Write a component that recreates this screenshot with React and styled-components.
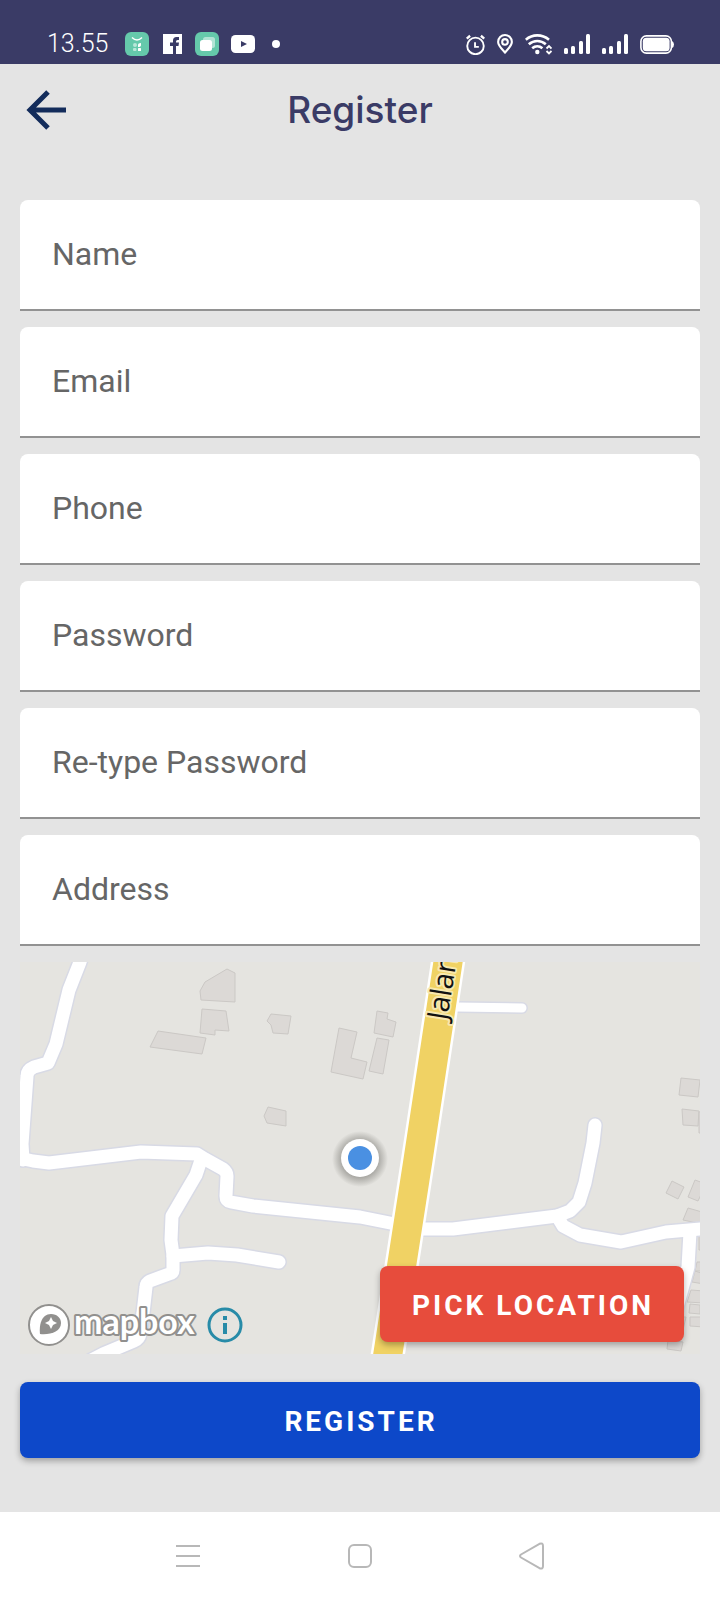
import React from "react";
import styled, { createGlobalStyle } from "styled-components";

const GlobalStyle = createGlobalStyle`
  *, *::before, *::after { box-sizing: border-box; }
  body { margin: 0; background: #e4e4e4; font-family: Roboto, "Noto Sans", sans-serif; }
  button { font-family: inherit; }
`;

const Screen = styled.div`
  display: flex;
  flex-direction: column;
  min-height: 100vh;
`;

const StatusBar = styled.div`
  display: flex;
  justify-content: space-between;
  align-items: center;
  height: 64px;
  padding: 24px 46px 0 47px;
  background: #3a3b66;
  color: #fff;
`;

const StatusGroup = styled.div`
  display: flex;
  align-items: center;
  gap: ${({ $gap }) => $gap}px;
  svg { display: block; }
`;

const Clock = styled.time`
  width: 66px;
  font-size: 25px;
  font-weight: 300;
  line-height: 28px;
`;

const Header = styled.header`
  display: grid;
  grid-template-columns: 60px 1fr 60px;
  align-items: center;
  height: 92px;
  padding: 0 16px;
`;

const IconButton = styled.button`
  display: flex;
  align-items: center;
  justify-content: center;
  padding: 0;
  border: 0;
  background: none;
  cursor: pointer;
`;

const Title = styled.h1`
  margin: 0;
  font-family: Inter, sans-serif;
  font-size: 37px;
  font-weight: 500;
  line-height: 44px;
  text-align: center;
  color: #3a3b66;
`;

const Form = styled.form`
  display: flex;
  flex: 1;
  flex-direction: column;
  gap: 16px;
  padding: 44px 20px 54px;
`;

const Field = styled.label`
  display: block;
  height: 111px;
  border-bottom: 2px solid #929292;
  border-radius: 8px 8px 0 0;
  background: #fff;
`;

const FieldInput = styled.input`
  display: block;
  width: 100%;
  height: 100%;
  padding: 0 32px 2px;
  border: 0;
  outline: 0;
  background: none;
  font-family: inherit;
  font-size: 32px;
  line-height: 40px;
  color: #222;
  &::placeholder { color: #666; opacity: 1; }
`;

const MapPanel = styled.section`
  position: relative;
  height: 392px;
  margin-bottom: 12px;
  overflow: hidden;
  background: #e5e4e0;
`;

const MapDrawing = styled.svg`
  display: block;
  width: 100%;
  height: 100%;
`;

const Attribution = styled.div`
  position: absolute;
  left: 8px;
  bottom: 7px;
  display: flex;
  align-items: center;
  gap: 7px;
  a, svg { display: block; }
`;

const ActionButton = styled.button`
  height: 76px;
  padding: 3px 30px 0 32px;
  border: 0;
  border-radius: 8px;
  background: ${({ $color }) => $color};
  box-shadow: 0 3px 6px rgba(0, 0, 0, 0.3);
  color: #fff;
  font-size: 28px;
  font-weight: 700;
  line-height: 36px;
  letter-spacing: 3px;
  text-transform: uppercase;
  cursor: pointer;
`;

const PickButton = styled(ActionButton)`
  position: absolute;
  right: 16px;
  bottom: 12px;
`;

const NavBar = styled.nav`
  display: flex;
  height: 88px;
  padding: 0 102px;
  background: #fff;
`;

const NavButton = styled(IconButton)`
  flex: 1;
  color: #b8b8b8;
`;

const fields = [
  { label: "Name", type: "text" },
  { label: "Email", type: "email" },
  { label: "Phone", type: "tel" },
  { label: "Password", type: "password" },
  { label: "Re-type Password", type: "password" },
  { label: "Address", type: "text" },
];

const roads = [
  "M64 -12L60 0L49 28L36 82L28 101L14 105Q7 108 7 114L2 182L3 198",
  "M-8 196L0 196L13 199L29 201L121 190L177 192L185 197L203 207Q207 210 207 214L206 234Q206 239 211 240L233 244L340 255L375 262L403 267L433 267L537 254L550 249L559 240L565 221L573 181L575 163",
  "M181 198L176 213L152 254L151 278L153 293L153 308Q153 311 149 312L130 319Q126 321 126 325L123 351L120 372Q119 377 114 379L83 392L60 404",
  "M153 294L188 291L217 293L259 300",
  "M537 254L543 264L560 273L601 280L646 270L690 266",
  "M670 270L668 305L657 345L653 365",
];

const buildings = [
  "207,7 215,11 215,40 181,38 180,29 185,20",
  "182,47 206,49 209,69 195,68 195,73 180,71",
  "138,69 186,76 182,92 130,85",
  "251,52 271,54 268,72 253,71 251,63 247,59",
  "248,145 266,149 266,164 247,161 244,154",
  "319,66 337,70 331,96 347,100 343,117 311,110",
  "357,49 368,51 367,57 376,60 373,75 354,71",
  "357,76 369,78 363,112 349,109",
  "661,116 680,118 678,135 659,133",
  "662,147 679,149 678,164 663,163",
  "679,150 684,150 684,171 679,171",
  "652,219 664,225 658,237 646,231",
  "675,218 686,222 678,239 668,235",
  "668,246 682,250 682,262 663,258",
  "679,274 684,274 684,288 679,288",
  "677,300 684,300 684,309 675,309",
  "675,309 684,312 684,322 672,320",
  "671,328 684,329 684,341 667,340",
  "670,342 680,343 680,352 669,351",
  "670,355 684,355 684,365 670,364",
  "662,355 666,355 663,368 660,368",
  "648,378 663,380 661,389 647,387",
];

const AppBadge = ({ children }) => (
  <svg width="24" height="24" viewBox="0 0 24 24" aria-hidden="true">
    <rect width="24" height="24" rx="6" fill="#65c9ab" />
    {children}
  </svg>
);

const Signal = () => (
  <svg width="26" height="20" viewBox="0 0 26 20" fill="#fff" aria-hidden="true">
    <rect x="0" y="14" width="4" height="6" rx="1.5" />
    <rect x="7" y="12" width="4" height="8" rx="1.5" />
    <rect x="15" y="7" width="4" height="13" rx="1.5" />
    <rect x="22" y="0" width="4" height="20" rx="1.5" />
  </svg>
);

const StatusIcons = () => (
  <StatusGroup $gap={12}>
    <svg width="19" height="21" viewBox="0 0 20 22" fill="none" stroke="#fff" strokeWidth="2" aria-hidden="true">
      <circle cx="10" cy="12.500" r="8.700" />
      <path d="M9.500 8.500v5h4" />
      <path d="M.8 4.800L4.300 1.800M19.200 4.800L15.700 1.800" strokeWidth="2.500" />
    </svg>
    <svg width="16" height="20" viewBox="0 0 17 21" fill="none" stroke="#fff" strokeWidth="2.200" aria-hidden="true">
      <path d="M8.500 19.500C6 16.500 1.200 12.500 1.200 8.300a7.300 7.300 0 0 1 14.600 0c0 4.200-4.800 8.200-7.300 11.200z" />
      <circle cx="8.500" cy="8.300" r="3" />
    </svg>
    <svg width="27" height="21" viewBox="0 0 27 21" fill="none" stroke="#fff" strokeWidth="2.600" aria-hidden="true">
      <path d="M.8 5.700C7.500-.1 17-.1 24 5.700M3.800 10.200c5-4.300 12-4.300 17 0M7.200 14.300c3-2.600 7.200-2.600 10.200 0" />
      <circle cx="12.300" cy="18" r="2.200" fill="#fff" stroke="none" />
      <path d="M21.500 14.500l2.500-2.500 2.500 2.500M21.500 17l2.500 2.500 2.500-2.500" strokeWidth="1.800" />
    </svg>
    <Signal />
    <Signal />
    <svg width="34" height="19" viewBox="0 0 34 19" aria-hidden="true">
      <rect x=".9" y=".9" width="30.500" height="17.200" rx="5.500" fill="none" stroke="#fff" strokeWidth="1.600" />
      <rect x="2.800" y="2.800" width="26.800" height="13.400" rx="3.500" fill="#fff" />
      <path d="M32 6q2 1 2 3.500T32 13z" fill="#fff" />
    </svg>
  </StatusGroup>
);

const Notifications = () => (
  <StatusGroup $gap={12}>
    <Clock>13.55</Clock>
    <AppBadge>
      <path d="M7 5.500q5 5 10 0" fill="none" stroke="#fff" strokeWidth="1.500" />
      <circle cx="10" cy="13" r="2" fill="#b9e7d9" />
      <path d="M13 15v-2q0-2 3-2v2q0 2-3 2z" fill="#fff" />
      <rect x="8" y="16" width="3.500" height="3" rx="1" fill="#b9e7d9" />
      <rect x="13" y="16" width="3" height="3" rx=".5" fill="#fff" />
    </AppBadge>
    <svg width="22" height="20" viewBox="0 0 22 20" aria-hidden="true">
      <rect x="2" width="19" height="20" fill="#fff" />
      <path d="M12 20v-8H9V8.500h3V6.500Q12 3 15.500 3H18v3h-1.500Q15 6 15 7.500v1h3l-.5 3.500H15v8z" fill="#3a3b66" />
    </svg>
    <AppBadge>
      <rect x="8" y="5" width="12" height="11" rx="2.500" fill="#b2e4d5" />
      <rect x="5" y="8" width="12" height="11" rx="2.500" fill="#fff" />
    </AppBadge>
    <svg width="24" height="18" viewBox="0 0 24 18" aria-hidden="true">
      <rect width="24" height="18" rx="4.500" fill="#fff" />
      <path d="M10 6v6l6-3z" fill="#3a3b66" />
    </svg>
    <svg width="18" height="8" viewBox="0 0 18 8" aria-hidden="true">
      <circle cx="9" cy="4" r="4" fill="#fff" />
    </svg>
  </StatusGroup>
);

const StreetMap = () => (
  <MapDrawing viewBox="0 0 680 392" preserveAspectRatio="xMidYMid slice" role="img" aria-label="Map of your location">
    <defs>
      <radialGradient id="halo">
        <stop offset="0.6" stopColor="#8a8984" stopOpacity="0.75" />
        <stop offset="1" stopColor="#8a8984" stopOpacity="0" />
      </radialGradient>
    </defs>
    <g fill="#dcd9d6" stroke="#cbc8c5" strokeWidth="1">
      {buildings.map((points) => <polygon key={points} points={points} />)}
    </g>
    <g fill="none" strokeLinecap="round" strokeLinejoin="round">
      <g stroke="#d8dae5" strokeWidth="16">
        {roads.map((d) => <path key={d} d={d} />)}
        <path d="M437 45L502 46" strokeWidth="12" />
      </g>
      <g stroke="#fff" strokeWidth="13">
        {roads.map((d) => <path key={d} d={d} />)}
        <path d="M437 45L502 46" strokeWidth="9" />
      </g>
      <path d="M431 -20L428 0L398 198L366 404" stroke="#fff" strokeWidth="34" />
      <path d="M431 -20L428 0L398 198L366 404" stroke="#f0d264" strokeWidth="29" />
    </g>
    <text
      transform="translate(427 59) rotate(-81)"
      fontFamily="Open Sans, sans-serif"
      fontSize="29"
      fill="#111"
      stroke="#f8e8ae"
      strokeWidth="4"
      strokeLinejoin="round"
      paintOrder="stroke"
    >
      Jalan
    </text>
    <circle cx="340" cy="197" r="28" fill="url(#halo)" />
    <circle cx="340" cy="196" r="19" fill="#fff" />
    <circle cx="340" cy="196" r="12" fill="#4a90e2" />
  </MapDrawing>
);

const MapboxLogo = () => (
  <svg width="172" height="44" viewBox="0 0 172 44" aria-hidden="true">
    <circle cx="21" cy="22" r="20" fill="#fff" stroke="#91908e" strokeWidth="2" />
    <path d="M12 31C11 23 13 11 23 11C29 11 33 15 33 20C33 29 22 32 12 31Z" fill="#91908e" />
    <path d="M23 14l2 4 4 2-4 2-2 4-2-4-4-2 4-2z" fill="#fff" />
    <text
      x="46"
      y="31"
      fontFamily="Lato, sans-serif"
      fontSize="34"
      fontWeight="700"
      fill="#fff"
      stroke="#91908e"
      strokeWidth="4"
      strokeLinejoin="round"
      paintOrder="stroke"
    >
      mapbox
    </text>
  </svg>
);

export default function App() {
  return (
    <Screen>
      <GlobalStyle />
      <StatusBar>
        <Notifications />
        <StatusIcons />
      </StatusBar>
      <Header>
        <IconButton type="button" aria-label="Back">
          <svg width="40" height="40" viewBox="0 0 40 40" fill="none" stroke="#132c5b" strokeWidth="5" aria-hidden="true">
            <path d="M22 2L4 20L22 38M4 20H40" />
          </svg>
        </IconButton>
        <Title>Register</Title>
      </Header>
      <Form onSubmit={(event) => event.preventDefault()}>
        {fields.map(({ label, type }) => (
          <Field key={label}>
            <FieldInput type={type} placeholder={label} aria-label={label} />
          </Field>
        ))}
        <MapPanel>
          <StreetMap />
          <Attribution>
            <a href="#mapbox" aria-label="Mapbox"><MapboxLogo /></a>
            <IconButton type="button" aria-label="Map information">
              <svg width="36" height="36" viewBox="0 0 36 36" fill="none" stroke="#278ba8" aria-hidden="true">
                <circle cx="18" cy="18" r="16" strokeWidth="3" />
                <path d="M18 16V27M18 9V13" strokeWidth="4" />
              </svg>
            </IconButton>
          </Attribution>
          <PickButton type="button" $color="#e74c3c">Pick location</PickButton>
        </MapPanel>
        <ActionButton type="submit" $color="#0d48c9">Register</ActionButton>
      </Form>
      <NavBar aria-label="System">
        <NavButton type="button" aria-label="Recent apps">
          <svg width="24" height="24" viewBox="0 0 24 24" stroke="currentColor" strokeWidth="2" aria-hidden="true">
            <path d="M0 2H24M0 12H24M0 22H24" />
          </svg>
        </NavButton>
        <NavButton type="button" aria-label="Home">
          <svg width="24" height="24" viewBox="0 0 24 24" fill="none" stroke="currentColor" strokeWidth="2" aria-hidden="true">
            <rect x="1" y="1" width="22" height="22" rx="5" />
          </svg>
        </NavButton>
        <NavButton type="button" aria-label="Back">
          <svg width="26" height="28" viewBox="0 0 26 28" fill="none" stroke="currentColor" strokeWidth="2" strokeLinejoin="round" aria-hidden="true">
            <path d="M2 12.500L20.500 1.800Q24 .500 24 4V24Q24 27.500 20.500 26.200L2 15.500Q0 14 2 12.500Z" />
          </svg>
        </NavButton>
      </NavBar>
    </Screen>
  );
}
